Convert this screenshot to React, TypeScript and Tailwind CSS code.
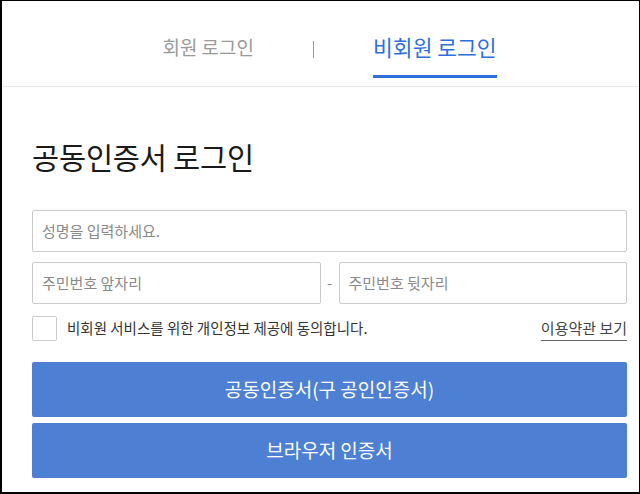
import React from "react";

export default function App() {
  const font = { fontFamily: '"Noto Sans CJK KR", "Noto Sans", sans-serif' };
  return (
    <div
      style={font}
      className="w-[640px] h-[494px] bg-white border-t border-r border-l-2 border-b-2 border-black overflow-hidden flex flex-col"
    >
      <div className="h-[86px] border-b border-[#e6e6e6] flex items-start justify-center pl-[18px] pt-[31px] shrink-0">
        <div className="flex items-start">
          <span className="text-[19px] text-[#9a9a9a] leading-[30px]">회원 로그인</span>
          <span className="mt-[9px] mx-[59px] w-px h-[17px] bg-[#9a9a9a]" />
          <span className="text-[21.5px] text-[#2e6fdb] leading-[30px] border-b-[3px] border-[#2e6fdb] pb-[13px]">
            비회원 로그인
          </span>
        </div>
      </div>
      <div className="pl-[30px] pr-[12px] pt-[48px] flex flex-col">
        <h1 className="text-[29.5px] text-[#1a1a1a] leading-[42px] tracking-[-0.2px]">공동인증서 로그인</h1>
        <div className="mt-[33px] h-[42px] border border-[#cccccc] rounded-[2px] flex items-center px-[9px] text-[15px] text-[#8a8a8a]">
          성명을 입력하세요.
        </div>
        <div className="mt-[10px] flex items-center">
          <div className="flex-1 h-[42px] border border-[#cccccc] rounded-[2px] flex items-center px-[9px] text-[15px] text-[#8a8a8a]">
            주민번호 앞자리
          </div>
          <span className="w-[18px] text-center text-[15px] text-[#888]">-</span>
          <div className="flex-1 h-[42px] border border-[#cccccc] rounded-[2px] flex items-center px-[9px] text-[15px] text-[#8a8a8a]">
            주민번호 뒷자리
          </div>
        </div>
        <div className="mt-[11px] flex items-center h-[26px]">
          <span className="w-[25px] h-[25px] border border-[#cccccc] rounded-[2px] bg-white" />
          <span className="ml-[10px] text-[14.5px] text-[#333]">비회원 서비스를 위한 개인정보 제공에 동의합니다.</span>
          <span className="ml-auto text-[15px] text-[#444] underline underline-offset-[6px] decoration-[#666]">
            이용약관 보기
          </span>
        </div>
        <button className="mt-[21px] h-[55px] bg-[#4d80d2] rounded-[2px] text-white text-[19px]">
          공동인증서(구 공인인증서)
        </button>
        <button className="mt-[6px] h-[55px] bg-[#4d80d2] rounded-[2px] text-white text-[19px]">
          브라우저 인증서
        </button>
      </div>
    </div>
  );
}
